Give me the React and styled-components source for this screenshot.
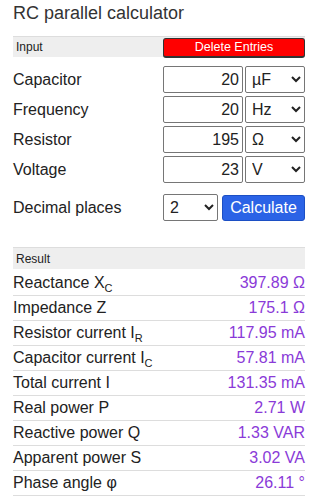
import styled, { createGlobalStyle } from "styled-components";

const Global = createGlobalStyle`
  body {
    margin: 0;
    background: #fff;
    font-family: "Liberation Sans", Arial, sans-serif;
    color: #222;
  }
`;

const Page = styled.div`
  width: 292px;
  margin-left: 13px;
  padding-top: 1px;
`;

const Title = styled.h1`
  margin: 0;
  font-size: 18px;
  font-weight: 400;
  color: #333;
  line-height: 24px;
  height: 35px;
`;

const SectionHead = styled.div`
  display: flex;
  align-items: center;
  justify-content: space-between;
  height: 20px;
  background: #eee;
  border-top: 1px solid #ddd;
  font-size: 12px;
  color: #222;
  padding-left: 3px;
  margin-top: ${(p) => p.$top || 0}px;
`;

const DeleteButton = styled.button`
  width: 142px;
  height: 20px;
  margin-top: 1px;
  background: #ff0000;
  color: #fff;
  border: 1px solid #333;
  border-bottom-width: 2px;
  border-radius: 3px;
  font-family: inherit;
  font-size: 12.5px;
  padding: 0;
`;

const Form = styled.div`
  display: flex;
  flex-direction: column;
  gap: 3px;
  padding-top: 9px;
`;

const Row = styled.div`
  display: flex;
  align-items: center;
  height: 27px;
`;

const Label = styled.label`
  width: 150px;
  font-size: 16px;
  color: #222;
`;

const NumberInput = styled.input`
  box-sizing: border-box;
  width: 80px;
  height: 27px;
  margin-right: 2px;
  border: 1px solid #767676;
  border-radius: 2px;
  font-family: inherit;
  font-size: 16px;
  text-align: right;
  padding: 0 3px;
  color: #222;
`;

const Select = styled.select`
  box-sizing: border-box;
  width: ${(p) => p.$w || 60}px;
  height: 27px;
  border: 1px solid #767676;
  border-radius: 2px;
  font-family: inherit;
  font-size: 16px;
  color: #222;
  background: #fff;
  padding: 0 0 0 2px;
`;

const DecimalRow = styled(Row)`
  margin-top: 11px;
`;

const CalcButton = styled.button`
  margin-left: 4px;
  width: 83px;
  height: 26px;
  background: #2b63e6;
  border: 1px solid #1c4fc4;
  border-radius: 3px;
  color: #fff;
  font-family: inherit;
  font-size: 16px;
  padding: 0;
`;

const ResultHead = styled(SectionHead)`
  height: 21px;
`;

const ResultRow = styled.div`
  display: flex;
  justify-content: space-between;
  align-items: center;
  height: 24px;
  border-bottom: 1px solid #ddd;
  font-size: 16px;

  &:nth-child(2) {
    height: 25px;
    padding-top: 1px;
  }
`;

const Value = styled.span`
  color: #8a3ad8;
`;

const Sub = styled.sub`
  font-size: 11px;
  vertical-align: -4px;
  line-height: 0;
`;

const inputs = [
  { label: "Capacitor", value: "20", units: ["µF", "nF", "pF", "mF", "F"] },
  { label: "Frequency", value: "20", units: ["Hz", "kHz", "MHz"] },
  { label: "Resistor", value: "195", units: ["Ω", "kΩ", "MΩ"] },
  { label: "Voltage", value: "23", units: ["V", "mV", "kV"] },
];

const results = [
  { label: "Reactance X", sub: "C", value: "397.89 Ω" },
  { label: "Impedance Z", value: "175.1 Ω" },
  { label: "Resistor current I", sub: "R", value: "117.95 mA" },
  { label: "Capacitor current I", sub: "C", value: "57.81 mA" },
  { label: "Total current I", value: "131.35 mA" },
  { label: "Real power P", value: "2.71 W" },
  { label: "Reactive power Q", value: "1.33 VAR" },
  { label: "Apparent power S", value: "3.02 VA" },
  { label: "Phase angle φ", value: "26.11 °" },
];

export default function App() {
  return (
    <Page>
      <Global />
      <Title>RC parallel calculator</Title>
      <SectionHead>
        <span>Input</span>
        <DeleteButton>Delete Entries</DeleteButton>
      </SectionHead>
      <Form>
        {inputs.map((r) => (
          <Row key={r.label}>
            <Label>{r.label}</Label>
            <NumberInput defaultValue={r.value} />
            <Select defaultValue={r.units[0]}>
              {r.units.map((u) => (
                <option key={u}>{u}</option>
              ))}
            </Select>
          </Row>
        ))}
      </Form>
      <DecimalRow>
        <Label>Decimal places</Label>
        <Select $w={55} defaultValue="2">
          {["0", "1", "2", "3", "4", "5"].map((d) => (
            <option key={d}>{d}</option>
          ))}
        </Select>
        <CalcButton>Calculate</CalcButton>
      </DecimalRow>
      <div>
        <ResultHead $top={26}>
          <span>Result</span>
        </ResultHead>
        {results.map((r) => (
          <ResultRow key={r.label}>
            <span>
              {r.label}
              {r.sub && <Sub>{r.sub}</Sub>}
            </span>
            <Value>{r.value}</Value>
          </ResultRow>
        ))}
      </div>
    </Page>
  );
}
